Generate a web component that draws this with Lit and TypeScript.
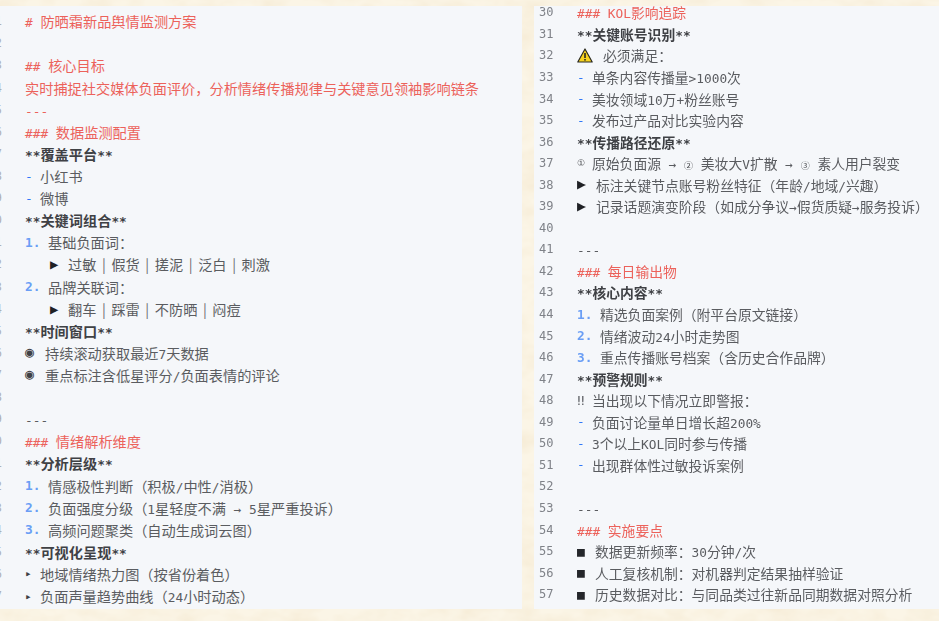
import { LitElement, html, css, svg } from "lit";
import { customElement } from "lit/decorators.js";

type Row = { n: number; p?: string; pc?: string; t?: string; c?: string; ind?: boolean; warn?: boolean };

const red = (t: string) => ({ t, c: "red" });
const bold = (t: string) => ({ t, c: "bold" });
const dash = (t: string) => ({ p: "-", pc: "dash w15", t });
const num = (p: string, t: string) => ({ p, pc: "blue w23", t });

const leftRows: Omit<Row, "n">[] = [
  red("# 防晒霜新品舆情监测方案"),
  {},
  red("## 核心目标"),
  red("实时捕捉社交媒体负面评价,分析情绪传播规律与关键意见领袖影响链条"),
  red("---"),
  red("### 数据监测配置"),
  bold("**覆盖平台**"),
  dash("小红书"),
  dash("微博"),
  bold("**关键词组合**"),
  num("1.", "基础负面词:"),
  { p: "▶", pc: "tri", t: "过敏|假货|搓泥|泛白|刺激", ind: true },
  num("2.", "品牌关联词:"),
  { p: "▶", pc: "tri", t: "翻车|踩雷|不防晒|闷痘", ind: true },
  bold("**时间窗口**"),
  { p: "◉", pc: "dot", t: "持续滚动获取最近7天数据" },
  { p: "◉", pc: "dot", t: "重点标注含低星评分/负面表情的评论" },
  {},
  { t: "---" },
  red("### 情绪解析维度"),
  bold("**分析层级**"),
  num("1.", "情感极性判断(积极/中性/消极)"),
  num("2.", "负面强度分级(1星轻度不满 → 5星严重投诉)"),
  num("3.", "高频问题聚类(自动生成词云图)"),
  bold("**可视化呈现**"),
  { p: "▸", pc: "small w15", t: "地域情绪热力图(按省份着色)" },
  { p: "▸", pc: "small w15", t: "负面声量趋势曲线(24小时动态)" },
];

const rightRows: Omit<Row, "n">[] = [
  red("### KOL影响追踪"),
  bold("**关键账号识别**"),
  { warn: true, t: "必须满足:" },
  dash("单条内容传播量>1000次"),
  dash("美妆领域10万+粉丝账号"),
  dash("发布过产品对比实验内容"),
  bold("**传播路径还原**"),
  { p: "①", pc: "circ", t: "原始负面源 → ② 美妆大V扩散 → ③ 素人用户裂变" },
  { p: "▶", pc: "tri w19", t: "标注关键节点账号粉丝特征(年龄/地域/兴趣)" },
  { p: "▶", pc: "tri w19", t: "记录话题演变阶段(如成分争议→假货质疑→服务投诉)" },
  {},
  { t: "---" },
  red("### 每日输出物"),
  bold("**核心内容**"),
  num("1.", "精选负面案例(附平台原文链接)"),
  num("2.", "情绪波动24小时走势图"),
  num("3.", "重点传播账号档案(含历史合作品牌)"),
  bold("**预警规则**"),
  { p: "‼", pc: "w15", t: "当出现以下情况立即警报:" },
  dash("负面讨论量单日增长超200%"),
  dash("3个以上KOL同时参与传播"),
  dash("出现群体性过敏投诉案例"),
  {},
  { t: "---" },
  red("### 实施要点"),
  { p: "■", pc: "sq", t: "数据更新频率:30分钟/次" },
  { p: "■", pc: "sq", t: "人工复核机制:对机器判定结果抽样验证" },
  { p: "■", pc: "sq", t: "历史数据对比:与同品类过往新品同期数据对照分析" },
];

const warnIcon = svg`<svg class="warn" width="16" height="15" viewBox="0 0 16 15">
  <path d="M8 1 L15.2 14 H0.8 Z" fill="#f7d21e" stroke="#2a2a22" stroke-width="1.2" stroke-linejoin="round"/>
  <rect x="7.2" y="5" width="1.6" height="5" fill="#2a2a22"/>
  <rect x="7.2" y="11" width="1.6" height="1.6" fill="#2a2a22"/>
</svg>`;

// Chinese punctuation in the row texts is full width.
const fullWidth = (t: string) =>
  t.replace(/,/g, "\uFF0C").replace(/\(/g, "\uFF08").replace(/\)/g, "\uFF09").replace(/:/g, "\uFF1A");

function runs(text: string) {
  return fullWidth(text).split(/([\x20-\x7b\x7d\x7e→]+|\||[②③])/).filter(Boolean).map((s) =>
    s === "|" ? html`<span class="sep">|</span>`
    : /^[②③]$/.test(s) ? html`<span class="cc">${s}</span>`
    : /^[\x20-\x7e→]+$/.test(s) ? html`<span class="l">${s}</span>`
    : s
  );
}

@customElement("app-root")
export class AppRoot extends LitElement {
  static styles = css`
    :host { display: block; width: 939px; height: 621px; overflow: hidden; position: relative; background: #fbf5e6; }
    .texture { position: absolute; inset: 0; width: 939px; height: 621px; }
    .page {
      position: relative; display: grid; grid-template-columns: 522px 405px; column-gap: 12px;
      height: 603px; padding-top: 6px; filter: blur(0.55px);
      font-family: "Noto Sans CJK SC", sans-serif; color: #5a5c60;
    }
    .panel { background: #f5f7fa; overflow: hidden; display: flex; flex-direction: column; }
    .left { font-size: 14.2px; --rh: 22.12px; padding-top: 4.2px; }
    .right { font-size: 13.8px; --rh: 21.55px; }
    .right .rows { margin-top: -4.4px; }
    .row { display: flex; align-items: center; height: var(--rh); white-space: nowrap; }
    .ln { flex: none; text-align: right; color: #7f8288; font-family: "DejaVu Sans Mono", monospace; font-size: 12px; }
    .left .ln { width: 2px; margin-right: 23px; direction: rtl; overflow: hidden; opacity: 0.6; }
    .right .ln { width: 14px; margin: 0 24px 0 5px; }
    .body { display: flex; align-items: center; }
    .l { font-family: "DejaVu Sans Mono", monospace; font-size: 12.8px; white-space: pre; }
    .cc { display: inline-block; width: 9px; text-align: center; font-size: 9px; color: #4a4c50; }
    .red { color: #ec625b; }
    .bold { color: #3f4145; font-weight: 700; }
    .pre { display: inline-block; flex: none; font-family: "DejaVu Sans Mono", monospace; font-size: 12.8px; }
    .blue { color: #6a9ef5; font-weight: 700; }
    .dash { color: #2f78f8; }
    .w15 { width: 15px; }
    .w23 { width: 23px; }
    .tri { width: 18px; color: #1f2125; font-size: 14px; line-height: 1; }
    .ind { margin-left: 25px; }
    .dot { width: 20px; color: #3f4145; font-size: 15px; line-height: 1; }
    .small { color: #3f4145; font-size: 11px; }
    .circ { width: 15px; color: #4a4c50; font-size: 9px; }
    .sq { width: 18px; color: #24262a; font-size: 13px; line-height: 1; }
    .warn { flex: none; margin-right: 10px; }
    .sep { display: inline-block; width: 15px; text-align: center; color: #6a6c70; }
    .tri.w19 { width: 19px; font-size: 15px; }
  `;

  private renderRow(r: Row) {
    return html`<div class="row">
      <span class="ln">${r.n}</span>
      <div class="body ${r.c ?? ""} ${r.ind ? "ind" : ""}">
        ${r.warn ? warnIcon : ""}
        ${r.p ? html`<span class="pre ${r.pc ?? ""}">${r.p}</span>` : ""}
        <span>${r.t ? runs(r.t) : ""}</span>
      </div>
    </div>`;
  }

  render() {
    return html`
      <svg class="texture" aria-hidden="true">
        <filter id="paper"><feTurbulence type="fractalNoise" baseFrequency="0.035 0.06" numOctaves="3" seed="4"/>
          <feColorMatrix values="0 0 0 0 0.90  0 0 0 0 0.80  0 0 0 0 0.62  1.1 0 0 0 -0.38"/></filter>
        <rect width="939" height="621" filter="url(#paper)"/>
      </svg>
      <div class="page">
        <section class="panel left"><div class="rows">
          ${leftRows.map((r, i) => this.renderRow({ ...r, n: i + 1 }))}
        </div></section>
        <section class="panel right"><div class="rows">
          ${rightRows.map((r, i) => this.renderRow({ ...r, n: i + 30 }))}
        </div></section>
      </div>`;
  }
}
